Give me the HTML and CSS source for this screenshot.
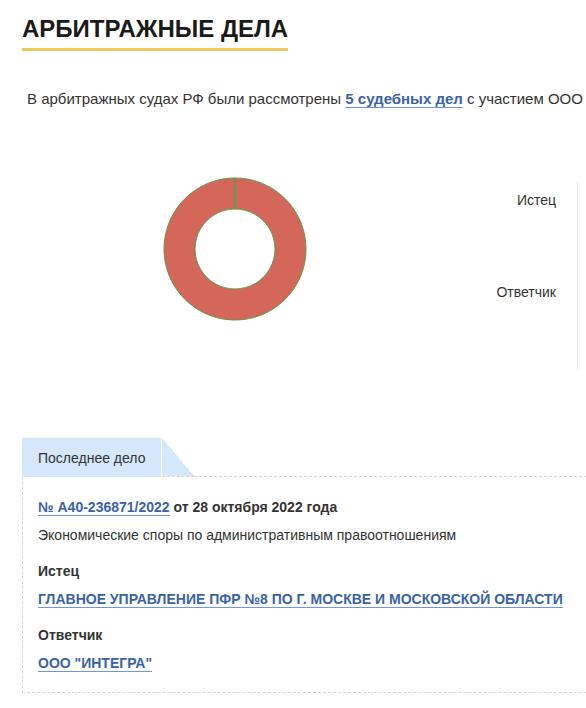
FILE: index.html
```html
<!DOCTYPE html>
<html lang="ru">
<head>
<meta charset="utf-8">
<link rel="stylesheet" href="styles.css">
</head>
<body>
<div class="page">
  <h2 class="title">АРБИТРАЖНЫЕ ДЕЛА</h2>
  <p class="lead">В арбитражных судах РФ были рассмотрены <a class="link" href="#">5 судебных дел</a> с участием ООО</p>
  <div class="chart-row">
    <div class="chart">
      <svg width="144" height="144" viewBox="0 0 144 144">
        <path d="M72 1 A71 71 0 1 1 71.99 1 Z M72 32 A40 40 0 1 0 72.01 32 Z" fill="#d4675a" stroke="#5f9a4e" stroke-width="1" fill-rule="evenodd"/>
        <line x1="72" y1="1" x2="72" y2="32" stroke="#5f9a4e" stroke-width="2"/>
      </svg>
    </div>
    <div class="legend">
      <div class="legend-item">Истец</div>
      <div class="legend-item">Ответчик</div>
    </div>
  </div>
  <div class="case">
    <div class="tab-row">
      <div class="tab">Последнее дело</div>
      <div class="tab-corner"></div>
      <div class="tab-rest"></div>
    </div>
    <div class="case-body">
      <div class="case-head"><a class="link" href="#">№ А40-236871/2022</a> от 28 октября 2022 года</div>
      <div class="case-desc">Экономические споры по административным правоотношениям</div>
      <div class="label">Истец</div>
      <div class="party"><a class="link caps" href="#">ГЛАВНОЕ УПРАВЛЕНИЕ ПФР №8 ПО Г. МОСКВЕ И МОСКОВСКОЙ ОБЛАСТИ</a></div>
      <div class="label">Ответчик</div>
      <div class="party"><a class="link caps" href="#">ООО "ИНТЕГРА"</a></div>
    </div>
  </div>
</div>
</body>
</html>
```

FILE: styles.css
```css
html, body {
  margin: 0;
  padding: 0;
  overflow: hidden;
  background: #fff;
}
body {
  font-family: "Liberation Sans", Arial, sans-serif;
  color: #333;
  font-size: 14px;
}
.page {
  padding: 14px 0 0 22px;
}
.title {
  display: inline-block;
  margin: 0;
  font-size: 24px;
  font-weight: bold;
  color: #1a1a1a;
  line-height: 30px;
  padding-bottom: 4px;
  border-bottom: 3px solid #f0c95c;
}
.lead {
  margin: 38px 0 0 5px;
  line-height: 20px;
  font-size: 15px;
  white-space: nowrap;
}
.link {
  color: #3a62a7;
  font-weight: bold;
  text-decoration: none;
  border-bottom: 1px solid #6f97d6;
}
.chart-row {
  display: flex;
  margin-top: 57px;
  height: 200px;
}
.chart {
  margin-left: 141px;
  width: 144px;
  height: 144px;
  margin-top: 11px;
}
.legend {
  margin-left: auto;
  width: 120px;
  margin-right: 8px;
  border-right: 1px solid #e4e4e4;
  margin-top: 16px;
  height: 187px;
  padding-right: 21px;
  text-align: right;
  color: #333;
}
.legend-item {
  line-height: 20px;
}
.legend-item:first-child {
  margin-top: 8px;
}
.legend-item + .legend-item {
  margin-top: 72px;
}
.case {
  margin-top: 72px;
  width: 600px;
}
.tab-row {
  display: flex;
  height: 39px;
}
.tab {
  width: 139px;
  background: #d4e7fb;
  box-sizing: border-box;
  padding-left: 16px;
  line-height: 41px;
  color: #333;
}
.tab-corner {
  width: 32px;
  margin-left: 1px;
  border-bottom: 1px dashed #d4d4d4;
  background: linear-gradient(to top right, #d4e7fb 50%, transparent 50%);
  height: 38px;
}
.tab-rest {
  flex: 1;
  border-bottom: 1px dashed #d4d4d4;
  height: 38px;
}
.case-body {
  border-left: 1px dashed #d4d4d4;
  border-bottom: 1px dashed #d4d4d4;
  padding: 20px 0 19px 15px;
}
.case-head {
  font-weight: bold;
  line-height: 20px;
}
.case-desc {
  margin-top: 8px;
  line-height: 20px;
}
.label {
  font-weight: bold;
  margin-top: 16px;
  line-height: 20px;
}
.party {
  margin-top: 8px;
  line-height: 20px;
}
```
